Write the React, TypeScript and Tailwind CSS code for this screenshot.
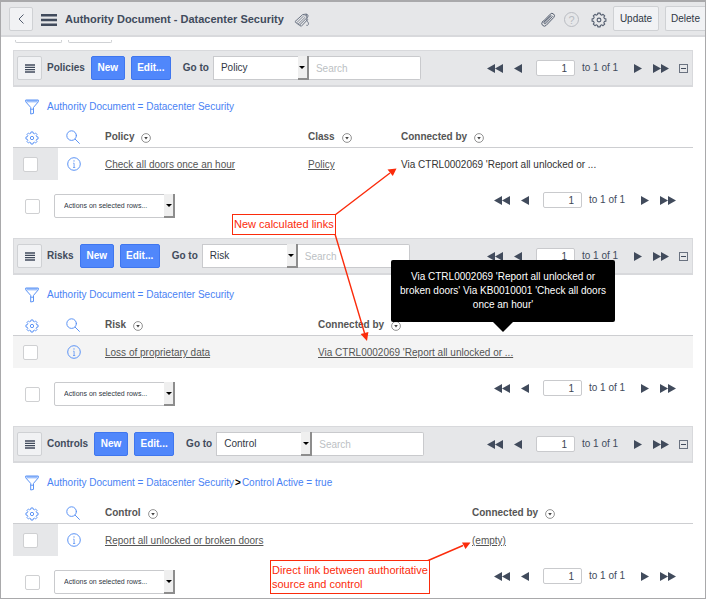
import type { ReactNode } from "react";

type Column = { label: string; value: string; link: boolean; width?: string; tooltip?: string };
type ListData = {
  id: string;
  title: string;
  option: string;
  filters: string[];
  columns: Column[];
  striped: boolean;
};

const LISTS: ListData[] = [
  {
    id: "policies",
    title: "Policies",
    option: "Policy",
    filters: ["Authority Document = Datacenter Security"],
    striped: false,
    columns: [
      { label: "Policy", value: "Check all doors once an hour", link: true, width: "w-[203px]" },
      { label: "Class", value: "Policy", link: true, width: "w-[93px]" },
      { label: "Connected by", value: "Via CTRL0002069 'Report all unlocked or ...", link: false },
    ],
  },
  {
    id: "risks",
    title: "Risks",
    option: "Risk",
    filters: ["Authority Document = Datacenter Security"],
    striped: true,
    columns: [
      { label: "Risk", value: "Loss of proprietary data", link: true, width: "w-[213px]" },
      {
        label: "Connected by",
        value: "Via CTRL0002069 'Report all unlocked or ...",
        link: true,
        tooltip: "Via CTRL0002069 'Report all unlocked or broken doors' Via KB0010001 'Check all doors once an hour'",
      },
    ],
  },
  {
    id: "controls",
    title: "Controls",
    option: "Control",
    filters: ["Authority Document = Datacenter Security", "Control Active = true"],
    striped: false,
    columns: [
      { label: "Control", value: "Report all unlocked or broken doors", link: true, width: "w-[367px]" },
      { label: "Connected by", value: "(empty)", link: true },
    ],
  },
];

const GEAR_PATH = (() => {
  const points: string[] = [];
  const teeth = 8;
  const step = (Math.PI * 2) / teeth;
  for (let i = 0; i < teeth; i++) {
    const a = i * step;
    const corners: [number, number][] = [
      [a - step * 0.32, 5.6],
      [a - step * 0.22, 7],
      [a + step * 0.22, 7],
      [a + step * 0.32, 5.6],
    ];
    for (const [t, r] of corners) {
      points.push(`${(8 + r * Math.cos(t)).toFixed(2)} ${(8 + r * Math.sin(t)).toFixed(2)}`);
    }
  }
  return `M${points.join("L")}Z`;
})();

function GearIcon({ className }: { className: string }) {
  return (
    <svg viewBox="0 0 16 16" className={className} fill="none" stroke="currentColor" strokeWidth="1.1" strokeLinejoin="round" aria-hidden="true">
      <path d={GEAR_PATH} />
      <circle cx="8" cy="8" r="1.9" />
    </svg>
  );
}

function FunnelIcon() {
  return (
    <svg viewBox="0 0 14 16" className="h-4 w-3.5" fill="none" stroke="#5b93f5" strokeLinejoin="round" aria-hidden="true">
      <path d="M1.5 2.2h11" strokeWidth="2.4" stroke="#9fc0fb" />
      <path d="M.7 1h12.6v1.8L8.5 8.4v6L5.7 15V8.4L.7 2.800z" />
      <path d="M5.8 10.200h2.6" />
    </svg>
  );
}

function SearchIcon() {
  return (
    <svg viewBox="0 0 14 14" className="h-3.5 w-3.5" fill="none" stroke="#5b93f5" strokeLinecap="round" aria-hidden="true">
      <circle cx="5.6" cy="5.6" r="4.8" />
      <path d="M9.2 9.2l4.2 4.2" />
    </svg>
  );
}

function InfoIcon() {
  return (
    <svg viewBox="0 0 14 14" className="h-3.5 w-3.5" fill="none" stroke="#5b93f5" aria-hidden="true">
      <circle cx="7" cy="7" r="6.3" />
      <path d="M6.2 6.200h.9v4.300M6 10.500h2.200" strokeWidth=".8" />
      <circle cx="7" cy="3.900" r=".7" fill="#5b93f5" stroke="none" />
    </svg>
  );
}

function PaperclipIcon() {
  return (
    <svg viewBox="0 0 16 16" className="h-4 w-4" fill="none" stroke="#555f70" strokeLinecap="round" strokeLinejoin="round" aria-hidden="true">
      <path d="M3.400 9.200l6.800-7a2.400 2.400 0 0 1 3.600 3.200l-7.600 8a2.600 2.600 0 0 1-3.900-3.400l1-1.100" />
      <path d="M12.400 4.600l-6.600 7a1.200 1.200 0 0 1-1.800-1.500l6.300-6.600M11.400 3.800L5 10.600" strokeWidth=".9" />
    </svg>
  );
}

function TagsIcon() {
  return (
    <svg viewBox="0 0 16 16" className="h-4 w-4" fill="none" stroke="#6b7483" strokeLinejoin="round" strokeLinecap="round" aria-hidden="true">
      <path d="M1.2 9.4L8.6 2.6l4-.6.3 3.8-7.3 7.2z" />
      <path d="M2.8 10.6l6.600-6.400M4.2 12l6.8-6.6" strokeWidth=".8" />
      <path d="M5.6 13l1.6 1.4 6.4-6.8" />
      <path d="M10.8 3.8c1-1.8 3.6-2 3.2.4-.3 1.6-1.6 2.2-1.2 4 .3 1.6 2.2 2.2 1.6 4.2-.4 1-1.2 1.4-1.8 1" strokeWidth=".9" />
    </svg>
  );
}

function Triangle({ label, double, back }: { label: string; double?: boolean; back?: boolean }) {
  return (
    <button type="button" aria-label={label} className="flex">
      <svg
        viewBox={double ? "0 0 16 9" : "0 0 8 9"}
        className={`h-[9px] ${double ? "w-4" : "w-2"} ${back ? "rotate-180" : ""}`}
        fill="#414b5c"
        aria-hidden="true"
      >
        <path d={double ? "M0 0l8 4.5L0 9zM8 0l8 4.5L8 9z" : "M0 0l8 4.5L0 9z"} />
      </svg>
    </button>
  );
}

function Pager({ name }: { name: string }) {
  return (
    <div className="flex items-center">
      <div className="flex items-center gap-[11px]">
        <Triangle label="First page" double back />
        <Triangle label="Previous page" back />
      </div>
      <input
        type="text"
        defaultValue="1"
        aria-label={`${name} row number`}
        className="mr-[7px] ml-3.5 h-4 w-[39px] rounded-[2px] border border-[#c9cacd] bg-white pr-[7px] text-right text-[#3c4553] outline-none"
      />
      <span className="w-[37px] whitespace-nowrap">to 1 of 1</span>
      <div className="ml-[15px] flex items-center gap-[11px]">
        <Triangle label="Next page" />
        <Triangle label="Last page" double />
      </div>
    </div>
  );
}

function SelectBox({ label, option, small }: { label: string; option: string; small?: boolean }) {
  return (
    <div className={`relative h-6 ${small ? "w-[121px]" : "w-24"}`}>
      <select
        aria-label={label}
        className={`block h-6 w-full appearance-none border border-[#c9cacd] bg-white text-[#2f3744] outline-none ${
          small ? "rounded-[2px] pl-[9px] text-[7px]" : "pl-[7px] text-[10px]"
        }`}
      >
        <option>{option}</option>
      </select>
      <span className="pointer-events-none absolute inset-y-0 right-0 flex w-[11px] items-center justify-center border-r-2 border-b-2 border-[#8d8d8d] bg-[#efefef]">
        <svg viewBox="0 0 6 3" className="h-[3px] w-1.5" fill="#000" aria-hidden="true">
          <path d="M0 0h6L3 3z" />
        </svg>
      </span>
    </div>
  );
}

function Check({ label }: { label: string }) {
  return (
    <input
      type="checkbox"
      aria-label={label}
      className="block h-[15px] w-[15px] shrink-0 appearance-none rounded-[2px] border border-[#cfd0d2] bg-white"
    />
  );
}

function BlueButton({ children, className }: { children: ReactNode; className: string }) {
  return (
    <button type="button" className={`h-6 rounded-[2px] border border-[#3f76ee] bg-[#5087fb] font-bold text-white ${className}`}>
      {children}
    </button>
  );
}

function ListHeading({ label }: { label: string }) {
  return (
    <span className="flex items-center gap-[7px]">
      {label}
      <svg viewBox="0 0 10 10" className="mt-0.5 h-2.5 w-2.5" fill="none" stroke="#777" strokeWidth=".8" aria-hidden="true">
        <circle cx="5" cy="5" r="4.4" />
        <path d="M3.2 4h3.6L5 6.6z" fill="#444" stroke="none" />
      </svg>
    </span>
  );
}

function Tooltip({ text }: { text: string }) {
  return (
    <span
      role="tooltip"
      className="absolute bottom-[46px] left-[73px] z-10 w-56 rounded-[2px] bg-black px-2 py-2.5 text-center leading-[14px] text-white"
    >
      {text}
      <svg viewBox="0 0 20 10" className="absolute top-full left-1/2 h-2.5 w-5 -translate-x-1/2" aria-hidden="true">
        <path d="M0 0h20L10 10z" />
      </svg>
    </span>
  );
}

function RelatedList({ list }: { list: ListData }) {
  const rowTone = list.striped ? "bg-[#f4f4f4]" : "";
  const checkTone = list.striped ? "" : "bg-[#e6e7e9]";
  return (
    <section aria-label={list.title}>
      <div className="flex h-[37px] items-center border border-b-2 border-[#d8d9dc] bg-[#e6e7e9] pr-1 pl-[3px]">
        <button
          type="button"
          aria-label={`${list.title} menu`}
          className="flex h-6 w-[25px] items-center justify-center rounded-[2px] border border-[#cfd1d4] bg-[#f1f2f4]"
        >
          <svg viewBox="0 0 10 9" className="mt-px h-[9px] w-2.5" fill="none" stroke="#414b5c" strokeWidth="1.3" aria-hidden="true">
            <path d="M0 1h10M0 3.300h10M0 5.700h10M0 8h10" />
          </svg>
        </button>
        <h2 className="mr-1.5 ml-[5px] font-bold">{list.title}</h2>
        <BlueButton className="mr-1.5 w-[34px]">New</BlueButton>
        <BlueButton className="mr-3 w-10">Edit...</BlueButton>
        <span className="mr-1 whitespace-nowrap font-bold">Go to</span>
        <SelectBox label={`${list.title} go to field`} option={list.option} />
        <input
          type="text"
          placeholder="Search"
          aria-label={`Search ${list.title}`}
          className="h-6 w-28 rounded-r-[2px] border border-l-0 border-[#c9cacd] bg-white px-[7px] outline-none placeholder:text-[#bcbfc4]"
        />
        <div className="ml-auto flex items-center gap-2.5">
          <Pager name={list.title} />
          <button
            type="button"
            aria-label={`Collapse ${list.title}`}
            className="flex h-[9px] w-[9px] items-center justify-center border border-[#6a7280]"
          >
            <span className="h-px w-[5px] bg-[#414b5c]" />
          </button>
        </div>
      </div>

      <div className="flex h-[35px] items-center pt-1 pl-3">
        <button type="button" aria-label="Edit filter" className="mr-2 flex">
          <FunnelIcon />
        </button>
        <p className="flex gap-px text-[#4a82f4]">
          {list.filters.map((filter, i) => (
            <span key={filter} className="flex gap-px">
              {i > 0 && <b className="text-black">&gt;</b>}
              <a href="#filter">{filter}</a>
            </span>
          ))}
        </p>
      </div>

      <table className="w-full table-fixed border-separate border-spacing-0 text-left">
        <thead>
          <tr>
            <th className="h-[26px] w-[45px] border-b border-[#cdced1] p-0 pt-1.5 pl-3">
              <button type="button" aria-label="Personalize list" className="flex text-[#5b93f5]">
                <GearIcon className="h-3.5 w-3.5" />
              </button>
            </th>
            <th className="h-[26px] w-[47px] border-b border-[#cdced1] p-0 pt-1 pl-2">
              <button type="button" aria-label="Search columns" className="flex">
                <SearchIcon />
              </button>
            </th>
            {list.columns.map((col) => (
              <th
                key={col.label}
                scope="col"
                className={`h-[26px] border-b border-[#cdced1] p-0 pt-1 font-bold text-[#555] ${col.width ?? ""}`}
              >
                <ListHeading label={col.label} />
              </th>
            ))}
          </tr>
        </thead>
        <tbody>
          <tr className={rowTone}>
            <td className={`h-8 p-0 pl-2.5 ${checkTone}`}>
              <Check label={`Select ${list.columns[0].value}`} />
            </td>
            <td className="h-8 p-0 pl-[9px]">
              <button type="button" aria-label="Preview record" className="flex">
                <InfoIcon />
              </button>
            </td>
            {list.columns.map((col) => (
              <td key={col.label} className="relative h-8 p-0 pt-0.5 text-[#555]">
                {col.link ? (
                  <a href="#record" className="underline underline-offset-1">
                    {col.value}
                  </a>
                ) : (
                  <span className="text-[#333]">{col.value}</span>
                )}
                {col.tooltip && <Tooltip text={col.tooltip} />}
              </td>
            ))}
          </tr>
        </tbody>
      </table>

      <div className="flex items-start pt-3.5 pr-[17px] pl-3">
        <div className="flex items-center gap-3.5">
          <Check label={`Select all ${list.title}`} />
          <SelectBox label={`${list.title} row actions`} option="Actions on selected rows..." small />
        </div>
        <div className="-mt-0.5 ml-auto">
          <Pager name={`${list.title} footer`} />
        </div>
      </div>
    </section>
  );
}

function Annotations() {
  return (
    <>
      <svg className="pointer-events-none absolute -top-0.5 -left-px z-20 h-[599px] w-[706px]" viewBox="0 0 706 599" fill="none" stroke="#fb2b0b" strokeWidth="1.4" aria-hidden="true">
        <path d="M335 215L390 173M335 234L364.500 333M427 561L463 545.500" />
        <path d="M396.500 168.500L392.800 176L387.500 169.500zM367 341L360.600 334L368.400 332zM470.500 542.500L465.500 549L462 542.500z" fill="#fb2b0b" stroke="none" />
      </svg>
      <p className="absolute top-[212px] left-[231px] z-20 border border-[#fb2b0b] bg-white px-px py-0.5 text-[11px] leading-[15px] whitespace-nowrap text-[#fb2b0b]">
        New calculated links
      </p>
      <p className="absolute top-[558px] left-[269px] z-20 border border-[#fb2b0b] bg-white px-px py-0.5 text-[11px] leading-[14px] whitespace-nowrap text-[#fb2b0b]">
        Direct link between authoritative
        <br />
        source and control
      </p>
    </>
  );
}

export default function App() {
  return (
    <div className="relative min-h-screen overflow-hidden border border-t-2 border-[#a9a9ab] bg-white font-['Liberation_Sans',Arial,sans-serif] text-[10px] leading-[14px] text-[#414b5c]">
      <header className="flex h-[35px] items-center border-b-2 border-[#d8d9dc] bg-[#e6e7e9] pl-2">
        <button type="button" aria-label="Back" className="flex h-6 w-6 items-center justify-center rounded-[2px] border border-[#cfd1d4] bg-[#f1f2f4]">
          <svg viewBox="0 0 6 10" className="h-2.5 w-1.5" fill="none" stroke="#555f70" aria-hidden="true">
            <path d="M5.500.500L1 5l4.500 4.500" />
          </svg>
        </button>
        <button type="button" aria-label="Form menu" className="mr-2 ml-2 flex pt-0.5">
          <svg viewBox="0 0 16 12" className="h-3 w-4" fill="#414b5c" aria-hidden="true">
            <path d="M0 0h16v2.500H0zM0 4.700h16v2.500H0zM0 9.400h16v2.500H0z" />
          </svg>
        </button>
        <h1 className="text-[11px] font-bold whitespace-nowrap">Authority Document - Datacenter Security</h1>
        <button type="button" aria-label="Tags" className="ml-2.5 flex pt-0.5">
          <TagsIcon />
        </button>
        <div className="ml-auto flex items-center">
          <button type="button" aria-label="Attachments" className="flex pt-0.5">
            <PaperclipIcon />
          </button>
          <button type="button" aria-label="Help" className="ml-2 flex pt-0.5">
            <span className="flex h-[15px] w-[15px] items-center justify-center rounded-full border border-[#b9bcc2] text-[11px] text-[#b9bcc2]">
              ?
            </span>
          </button>
          <button type="button" aria-label="Settings" className="mr-1.5 ml-3 flex pt-0.5 text-[#555f70]">
            <GearIcon className="h-4 w-4" />
          </button>
          <button type="button" className="mr-1.5 h-[25px] w-[46px] rounded-[2px] border border-[#cfd1d4] bg-[#f1f2f4] text-[#2f3744]">
            Update
          </button>
          <button type="button" className="h-[25px] w-10 rounded-l-[2px] border border-r-0 border-[#cfd1d4] bg-[#f1f2f4] text-[#2f3744]">
            Delete
          </button>
        </div>
      </header>

      <main className="px-3 pt-[3px] pb-1">
        <div className="mb-[7px] flex h-[3px] gap-1.5 px-0.5" aria-hidden="true">
          <span className="w-[47px] rounded-b-[2px] border border-t-0 border-[#cfd1d4]" />
          <span className="w-11 rounded-b-[2px] border border-t-0 border-[#cfd1d4]" />
        </div>
        <div className="flex flex-col gap-5">
          {LISTS.map((list) => (
            <RelatedList key={list.id} list={list} />
          ))}
        </div>
      </main>
      <Annotations />
    </div>
  );
}
